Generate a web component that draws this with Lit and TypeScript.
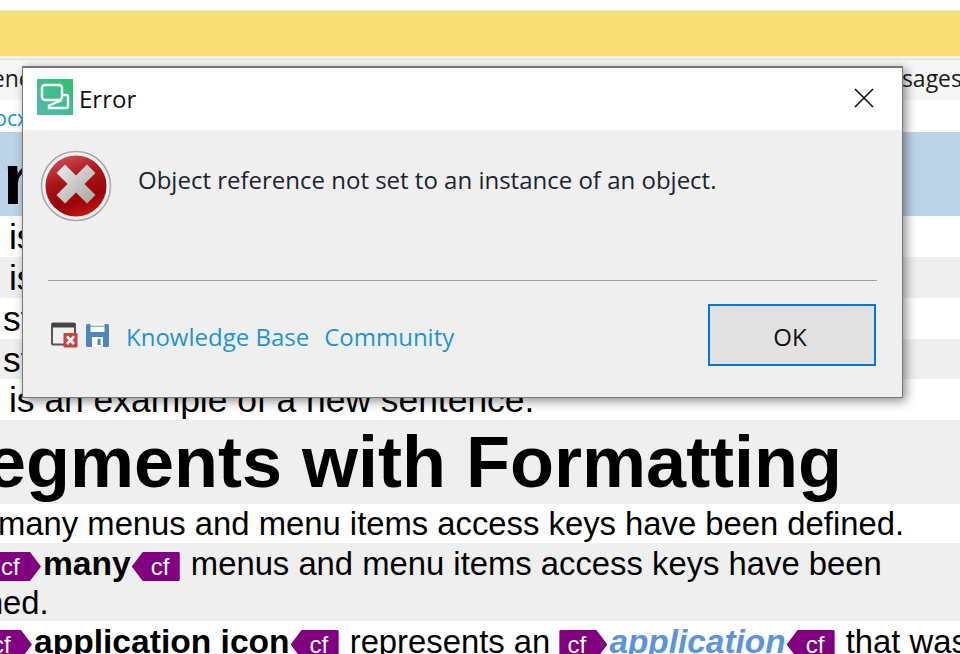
import { LitElement, html, css } from 'lit';
import { customElement } from 'lit/decorators.js';

@customElement('app-root')
export class AppRoot extends LitElement {
  static styles = css`
    :host {
      display: block;
      position: relative;
      width: 960px;
      height: 654px;
      overflow: hidden;
      background: #fff;
      font-family: "Liberation Sans", Arial, sans-serif;
      color: #000;
    }
    .top-gap { height: 10px; background: #fff; }
    .banner { height: 46px; box-sizing: border-box; background: #f7df76; border-top: 1px solid #dfe8ee; }
    .banner-gap { height: 4px; background: #f0f0f0; border-bottom: 1px solid #d8dee3; box-sizing: border-box; }
    .tabs {
      height: 40px;
      background: #f6f6f6;
      display: flex;
      justify-content: space-between;
      font: 23px/36px "Open Sans", sans-serif;
      color: #1c1c1c;
      overflow: hidden;
    }
    .tabs span:first-child { margin-left: -56px; }
    .tabs span:last-child { margin-right: -2px; }
    .path {
      height: 32px;
      background: #fff;
      font: 21px/36px "Open Sans", sans-serif;
      color: #0f97d8;
      margin-left: -24px;
    }
    .title-row {
      height: 84px;
      background: #bdd4e8;
      font-weight: 700;
      font-size: 72px;
      line-height: 94px;
      overflow: hidden;
    }
    .title-row span { margin-left: -17px; }
    .row {
      font-size: 32.8px;
      line-height: 39px;
      height: 39px;
      padding-top: 1px;
      white-space: nowrap;
      overflow: hidden;
    }
    .row.big { font-size: 35.4px; line-height: 40px; height: 40px; }
    .row.grey { background: #efefef; }
    .row.big.short { height: 39px; }
    .row.plain { padding-top: 0; }
    .row.tall { height: 77px; }
    .row.last { height: 32px; }
    .heading {
      height: 84px;
      background: #efefef;
      font-weight: 700;
      font-size: 72px;
      line-height: 84px;
      white-space: nowrap;
      overflow: hidden;
    }
    .heading span { margin-left: -62px; }
    .t1 { margin-left: 9px; }
    .t4 { margin-left: 3px; }
    .t2 { margin-left: -2px; }
    .t3 { margin-left: -68px; }
    .tag {
      display: inline-block;
      box-sizing: border-box;
      vertical-align: 0;
      width: 48px;
      height: 29px;
      background: #800080;
      color: #fff;
      font-size: 24px;
      line-height: 29px;
      font-weight: 400;
      font-style: normal;
    }
    .tag.open {
      padding-left: 8px;
      margin: 0 2px 0 0;
      clip-path: polygon(1px 0, 37px 0, 100% 50%, 37px 100%, 1px 100%, 0 28px, 0 1px);
    }
    .tag.close {
      padding-left: 19px;
      margin: 0 2px 0 1px;
      clip-path: polygon(11px 0, 47px 0, 100% 1px, 100% 28px, 47px 100%, 11px 100%, 0 50%);
    }
    .tag.clip-a { margin-left: -7px; }
    .tag.clip-b { margin-left: -16px; }
    .app { color: #5b94dc; font-weight: 700; font-style: italic; font-size: 33.4px; }
    b { font-weight: 700; font-size: 33.6px; }

    .dialog {
      position: absolute;
      left: 22px;
      top: 66px;
      width: 881px;
      height: 332px;
      box-sizing: border-box;
      border: 1px solid #777;
      border-top-width: 2px;
      background: #efefef;
      box-shadow: 3px 3px 10px rgba(0, 0, 0, 0.45);
      display: flex;
      flex-direction: column;
      font-family: "Open Sans", "Noto Sans", sans-serif;
      color: #111;
    }
    .titlebar {
      height: 62px;
      box-sizing: border-box;
      padding: 0 28px 4px 14px;
      background: #fff;
      display: flex;
      align-items: center;
      gap: 6px;
      font-size: 24px;
    }
    .titlebar .name { flex: 1; margin-top: 2px; }
    .close-x { margin-top: 2px; }
    .msg {
      height: 148px;
      display: flex;
      align-items: flex-start;
      box-sizing: border-box;
      padding: 20px 0 0 17px;
      gap: 26px;
      font-size: 24px;
    }
    .msg .text { margin-top: 14px; line-height: 32px; color: #1a2430; }
    .divider { height: 1px; margin: 2px 25px 0; background: #a0a0a0; }
    .foot {
      flex: 1;
      display: flex;
      align-items: center;
      padding: 0 26px 8px 28px;
      font-size: 24px;
    }
    .foot svg { display: block; }
    .foot .save { margin-left: 8px; }
    .links { display: flex; gap: 15px; margin: 3px 0 0 17px; color: #1a96d8; flex: 1; }
    .ok {
      width: 168px;
      height: 62px;
      box-sizing: border-box;
      border: 2px solid #0078d7;
      background: #e1e1e1;
      font: 24px "Open Sans", sans-serif;
      color: #111;
      padding: 2px 4px 0 0;
    }
  `;

  render() {
    return html`
      <div class="top-gap"></div>
      <div class="banner"></div>
      <div class="banner-gap"></div>
      <div class="tabs"><span>Sentence</span><span>Messages</span></div>
      <div class="path">.docx</div>
      <div class="title-row"><span>Intro</span></div>
      <div class="row big"><span class="t1">is an example of a new sentence.</span></div>
      <div class="row big grey"><span class="t1">is an example of a new sentence.</span></div>
      <div class="row big"><span class="t4">st sentence in this segment.</span></div>
      <div class="row big grey short"><span class="t4">st sentence in this segment.</span></div>
      <div class="row big"><span class="t1">is an example of a new sentence.</span></div>
      <div class="heading"><span>Segments with Formatting</span></div>
      <div class="row plain"><span class="t2">many menus and menu items access keys have been defined.</span></div>
      <div class="row grey tall">
        <span class="tag open clip-a">cf</span><b>many</b><span class="tag close">cf</span>
        menus and menu items access keys have been<br /><span class="t3">defined.</span>
      </div>
      <div class="row last">
        <span class="tag open clip-b">cf</span><b>application icon</b><span class="tag close">cf</span>
        represents an <span class="tag open">cf</span><span class="app">application</span><span class="tag close">cf</span>
        that was
      </div>

      <div class="dialog">
        <div class="titlebar">
          <svg width="36" height="36" viewBox="0 0 36 36">
            <defs>
              <linearGradient id="lg" x1="0" y1="1" x2="1" y2="0">
                <stop offset="0" stop-color="#54b9b0" />
                <stop offset="1" stop-color="#2dc26c" />
              </linearGradient>
            </defs>
            <rect width="36" height="36" fill="url(#lg)" />
            <rect x="5" y="6" width="20" height="15" rx="3" fill="none" stroke="#fff" stroke-width="2.4" />
            <path d="M12 27 L12 29 L29 29 Q31 29 31 27 L31 18 Q31 16 29 16 L25 16 M25 21 L11 27" fill="none" stroke="#fff" stroke-width="2.4" />
          </svg>
          <span class="name">Error</span>
          <svg class="close-x" width="20" height="20" viewBox="0 0 20 20">
            <path d="M1 1 L19 19 M19 1 L1 19" stroke="#111" stroke-width="1.6" />
          </svg>
        </div>
        <div class="msg">
          <svg width="72" height="72" viewBox="0 0 72 72">
            <defs>
              <linearGradient id="rd" x1="0.25" y1="0" x2="0.6" y2="1">
                <stop offset="0" stop-color="#cf5055" />
                <stop offset="0.4" stop-color="#ac1216" />
                <stop offset="0.75" stop-color="#9a0508" />
                <stop offset="1" stop-color="#c41414" />
              </linearGradient>
              <linearGradient id="xg" gradientUnits="userSpaceOnUse" x1="20" y1="18" x2="54" y2="52">
                <stop offset="0" stop-color="#e6e6e6" />
                <stop offset="1" stop-color="#a6a6a6" />
              </linearGradient>
            </defs>
            <circle cx="36" cy="36" r="34.5" fill="#f2f2f2" stroke="#a8a8a8" stroke-width="1.5" />
            <circle cx="36" cy="36" r="30.5" fill="url(#rd)" />
            <path d="M25 23 L47 45 M47 23 L25 45" stroke="url(#xg)" stroke-width="12" stroke-linecap="square" />
          </svg>
          <span class="text">Object reference not set to an instance of an object.</span>
        </div>
        <div class="divider"></div>
        <div class="foot">
          <svg width="27" height="26" viewBox="0 0 27 26">
            <rect x="1" y="1.5" width="23" height="21" rx="1" fill="none" stroke="#555" stroke-width="2" />
            <rect x="1" y="1" width="23" height="4.5" fill="#444" />
            <rect x="12.5" y="11" width="14" height="14.5" rx="1" fill="#c8443c" />
            <path d="M16 14.5 L23 22 M23 14.5 L16 22" stroke="#fff" stroke-width="2.6" />
          </svg>
          <svg class="save" width="23" height="23" viewBox="0 0 23 23">
            <path d="M1.5 0 H21.5 Q23 0 23 1.5 V21.5 Q23 23 21.5 23 H1.5 Q0 23 0 21.5 V1.5 Q0 0 1.5 0 Z" fill="#4f85bf" />
            <rect x="4.5" y="0" width="14" height="8" fill="#fff" />
            <rect x="4.5" y="1.5" width="14" height="1.6" fill="#4f85bf" opacity="0.6" />
            <rect x="6" y="13" width="11" height="10" fill="#fff" />
            <rect x="11.5" y="15" width="3" height="6" fill="#4f85bf" />
          </svg>
          <div class="links"><span>Knowledge Base</span><span>Community</span></div>
          <button class="ok">OK</button>
        </div>
      </div>
    `;
  }
}
